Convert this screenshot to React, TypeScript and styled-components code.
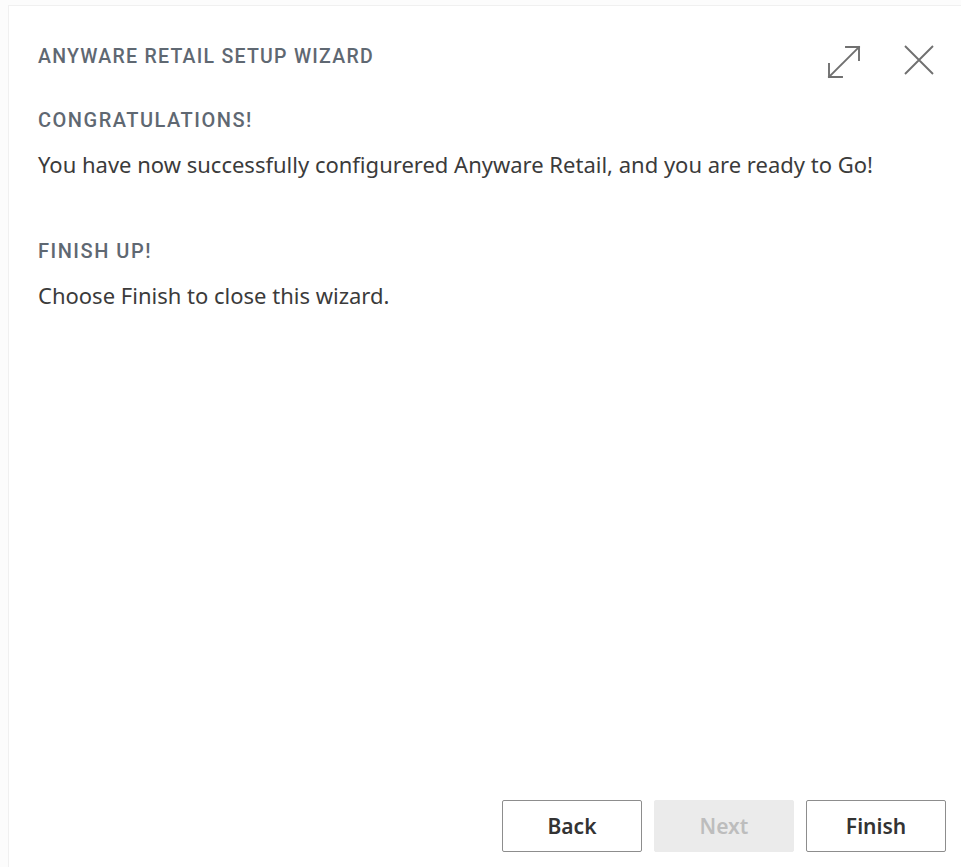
import React from "react";
import styled, { createGlobalStyle } from "styled-components";

const Global = createGlobalStyle`
  html, body { margin: 0; padding: 0; background: #fcfcfc; }
  body { font-family: "Noto Sans", "Open Sans", sans-serif; }
  * { box-sizing: border-box; }
`;

const Page = styled.div`
  width: 961px;
  height: 867px;
  padding: 5px 0 0 8px;
  background: #fcfcfc;
  display: flex;
`;

const Dialog = styled.div`
  flex: 1;
  background: #fff;
  border-top: 1px solid #f0f0f0;
  border-left: 1px solid #f0f0f0;
  padding: 37px 15px 15px 29px;
  display: flex;
  flex-direction: column;
`;

const Header = styled.div`
  display: flex;
  align-items: flex-start;
  justify-content: space-between;
  height: 28px;
`;

const Heading = styled.h2<{ $size: number; $spacing: number }>`
  margin: 0;
  font-family: "Roboto", "DejaVu Sans", sans-serif;
  font-weight: 500;
  font-size: ${(p) => p.$size}px;
  letter-spacing: ${(p) => p.$spacing}px;
  color: #5f6872;
  line-height: 28px;
`;

const IconBar = styled.div`
  display: flex;
  align-items: flex-start;
  gap: 41px;
  margin-right: 11px;
  color: #707070;
`;

const IconButton = styled.button<{ $top: number }>`
  border: 0;
  background: none;
  padding: 0;
  margin-top: ${(p) => p.$top}px;
  display: flex;
  color: inherit;
`;

const Section = styled.section<{ $top: number }>`
  display: flex;
  flex-direction: column;
  gap: 15px;
  margin-top: ${(p) => p.$top}px;
`;

const Text = styled.p`
  margin: 0;
  font-size: 22px;
  line-height: 30px;
  color: #3b3b3b;
`;

const Spacer = styled.div`
  flex: 1;
`;

const Footer = styled.div`
  display: flex;
  justify-content: flex-end;
  gap: 12px;
`;

const Button = styled.button<{ $disabled?: boolean }>`
  width: 140px;
  height: 52px;
  border-radius: 2px;
  font-family: "Noto Sans", sans-serif;
  font-size: 21px;
  font-weight: 600;
  border: 1px solid ${(p) => (p.$disabled ? "#ebebeb" : "#8d8d8d")};
  background: ${(p) => (p.$disabled ? "#ebebeb" : "#fff")};
  color: ${(p) => (p.$disabled ? "#bdbdbd" : "#333")};
`;

export default function App() {
  return (
    <>
      <Global />
      <Page>
        <Dialog>
          <Header>
            <Heading as="h1" $size={19.5} $spacing={1.25}>
              ANYWARE RETAIL SETUP WIZARD
            </Heading>
            <IconBar>
              <IconButton $top={1} aria-label="Expand">
                <svg width="36" height="36" viewBox="0 0 36 36" fill="none" stroke="currentColor" strokeWidth="1.9" strokeLinecap="square">
                  <path d="M3 33 L33 3" />
                  <path d="M20 3 H33 V16" />
                  <path d="M3 20 V33 H16" />
                </svg>
              </IconButton>
              <IconButton $top={1} aria-label="Close">
                <svg width="32" height="32" viewBox="0 0 32 32" fill="none" stroke="currentColor" strokeWidth="1.9">
                  <path d="M2 2 L30 30 M30 2 L2 30" />
                </svg>
              </IconButton>
            </IconBar>
          </Header>
          <Section $top={35}>
            <Heading $size={20} $spacing={1.5}>CONGRATULATIONS!</Heading>
            <Text>You have now successfully configurered Anyware Retail, and you are ready to Go!</Text>
          </Section>
          <Section $top={58}>
            <Heading $size={20} $spacing={1.5}>FINISH UP!</Heading>
            <Text>Choose Finish to close this wizard.</Text>
          </Section>
          <Spacer />
          <Footer>
            <Button>Back</Button>
            <Button $disabled disabled>Next</Button>
            <Button>Finish</Button>
          </Footer>
        </Dialog>
      </Page>
    </>
  );
}
